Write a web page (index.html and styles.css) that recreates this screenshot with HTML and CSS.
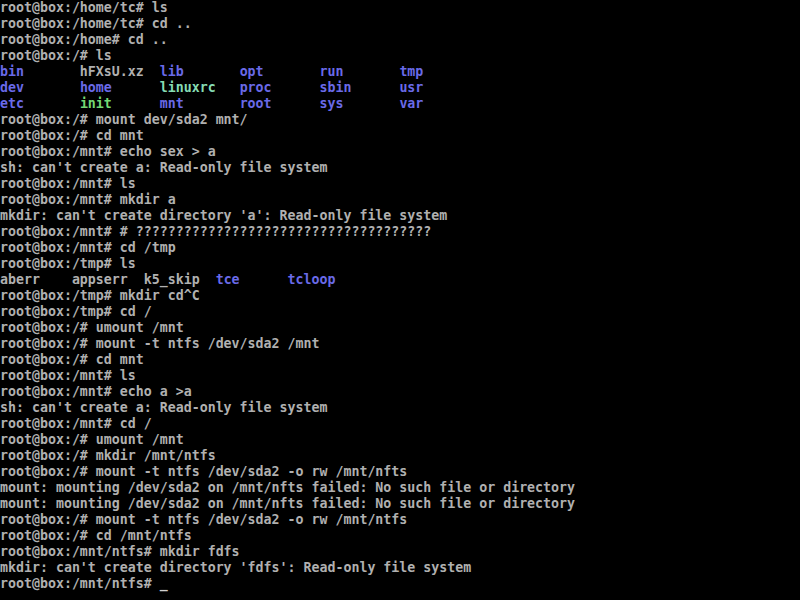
FILE: index.html
```html
<!DOCTYPE html>
<html lang="en">
  <head>
    <meta charset="UTF-8" />
    <title>tty1</title>
    <link rel="stylesheet" href="styles.css">
  </head>
  <body>
    <!-- console output -->
    <pre class="console">root@box:/home/tc# ls
root@box:/home/tc# cd ..
root@box:/home# cd ..
root@box:/# ls
<span class="dir">bin</span>       hFXsU.xz  <span class="dir">lib</span>       <span class="dir">opt</span>       <span class="dir">run</span>       <span class="dir">tmp</span>
<span class="dir">dev</span>       <span class="dir">home</span>      <span class="link">linuxrc</span>   <span class="dir">proc</span>      <span class="dir">sbin</span>      <span class="dir">usr</span>
<span class="dir">etc</span>       <span class="exec">init</span>      <span class="dir">mnt</span>       <span class="dir">root</span>      <span class="dir">sys</span>       <span class="dir">var</span>
root@box:/# mount dev/sda2 mnt/
root@box:/# cd mnt
root@box:/mnt# echo sex &gt; a
sh: can't create a: Read-only file system
root@box:/mnt# ls
root@box:/mnt# mkdir a
mkdir: can't create directory 'a': Read-only file system
root@box:/mnt# # ?????????????????????????????????????
root@box:/mnt# cd /tmp
root@box:/tmp# ls
aberr    appserr  k5_skip  <span class="dir">tce</span>      <span class="dir">tcloop</span>
root@box:/tmp# mkdir cd^C
root@box:/tmp# cd /
root@box:/# umount /mnt
root@box:/# mount -t ntfs /dev/sda2 /mnt
root@box:/# cd mnt
root@box:/mnt# ls
root@box:/mnt# echo a &gt;a
sh: can't create a: Read-only file system
root@box:/mnt# cd /
root@box:/# umount /mnt
root@box:/# mkdir /mnt/ntfs
root@box:/# mount -t ntfs /dev/sda2 -o rw /mnt/nfts
mount: mounting /dev/sda2 on /mnt/nfts failed: No such file or directory
mount: mounting /dev/sda2 on /mnt/nfts failed: No such file or directory
root@box:/# mount -t ntfs /dev/sda2 -o rw /mnt/ntfs
root@box:/# cd /mnt/ntfs
root@box:/mnt/ntfs# mkdir fdfs
mkdir: can't create directory 'fdfs': Read-only file system
root@box:/mnt/ntfs# <span class="cursor">_</span></pre>
  </body>
</html>
```
FILE: styles.css
```css
/* 控制台样式 */
* {
  margin: 0;
  padding: 0;
  box-sizing: border-box;
}

html,
body {
  background-color: #000000;
  width: 800px;
  height: 600px;
  overflow: hidden;
}

.console {
  font-family: "DejaVu Sans Mono", "Liberation Mono", monospace;
  font-size: 13.28px;
  font-weight: bold;
  line-height: 16px;
  color: #b0b0b0;
  white-space: pre;
}

.dir {
  color: #6a6ae8;
}

.link {
  color: #86dcb4;
}

.exec {
  color: #74d874;
}

.cursor {
  color: #d0d0d0;
}
```
